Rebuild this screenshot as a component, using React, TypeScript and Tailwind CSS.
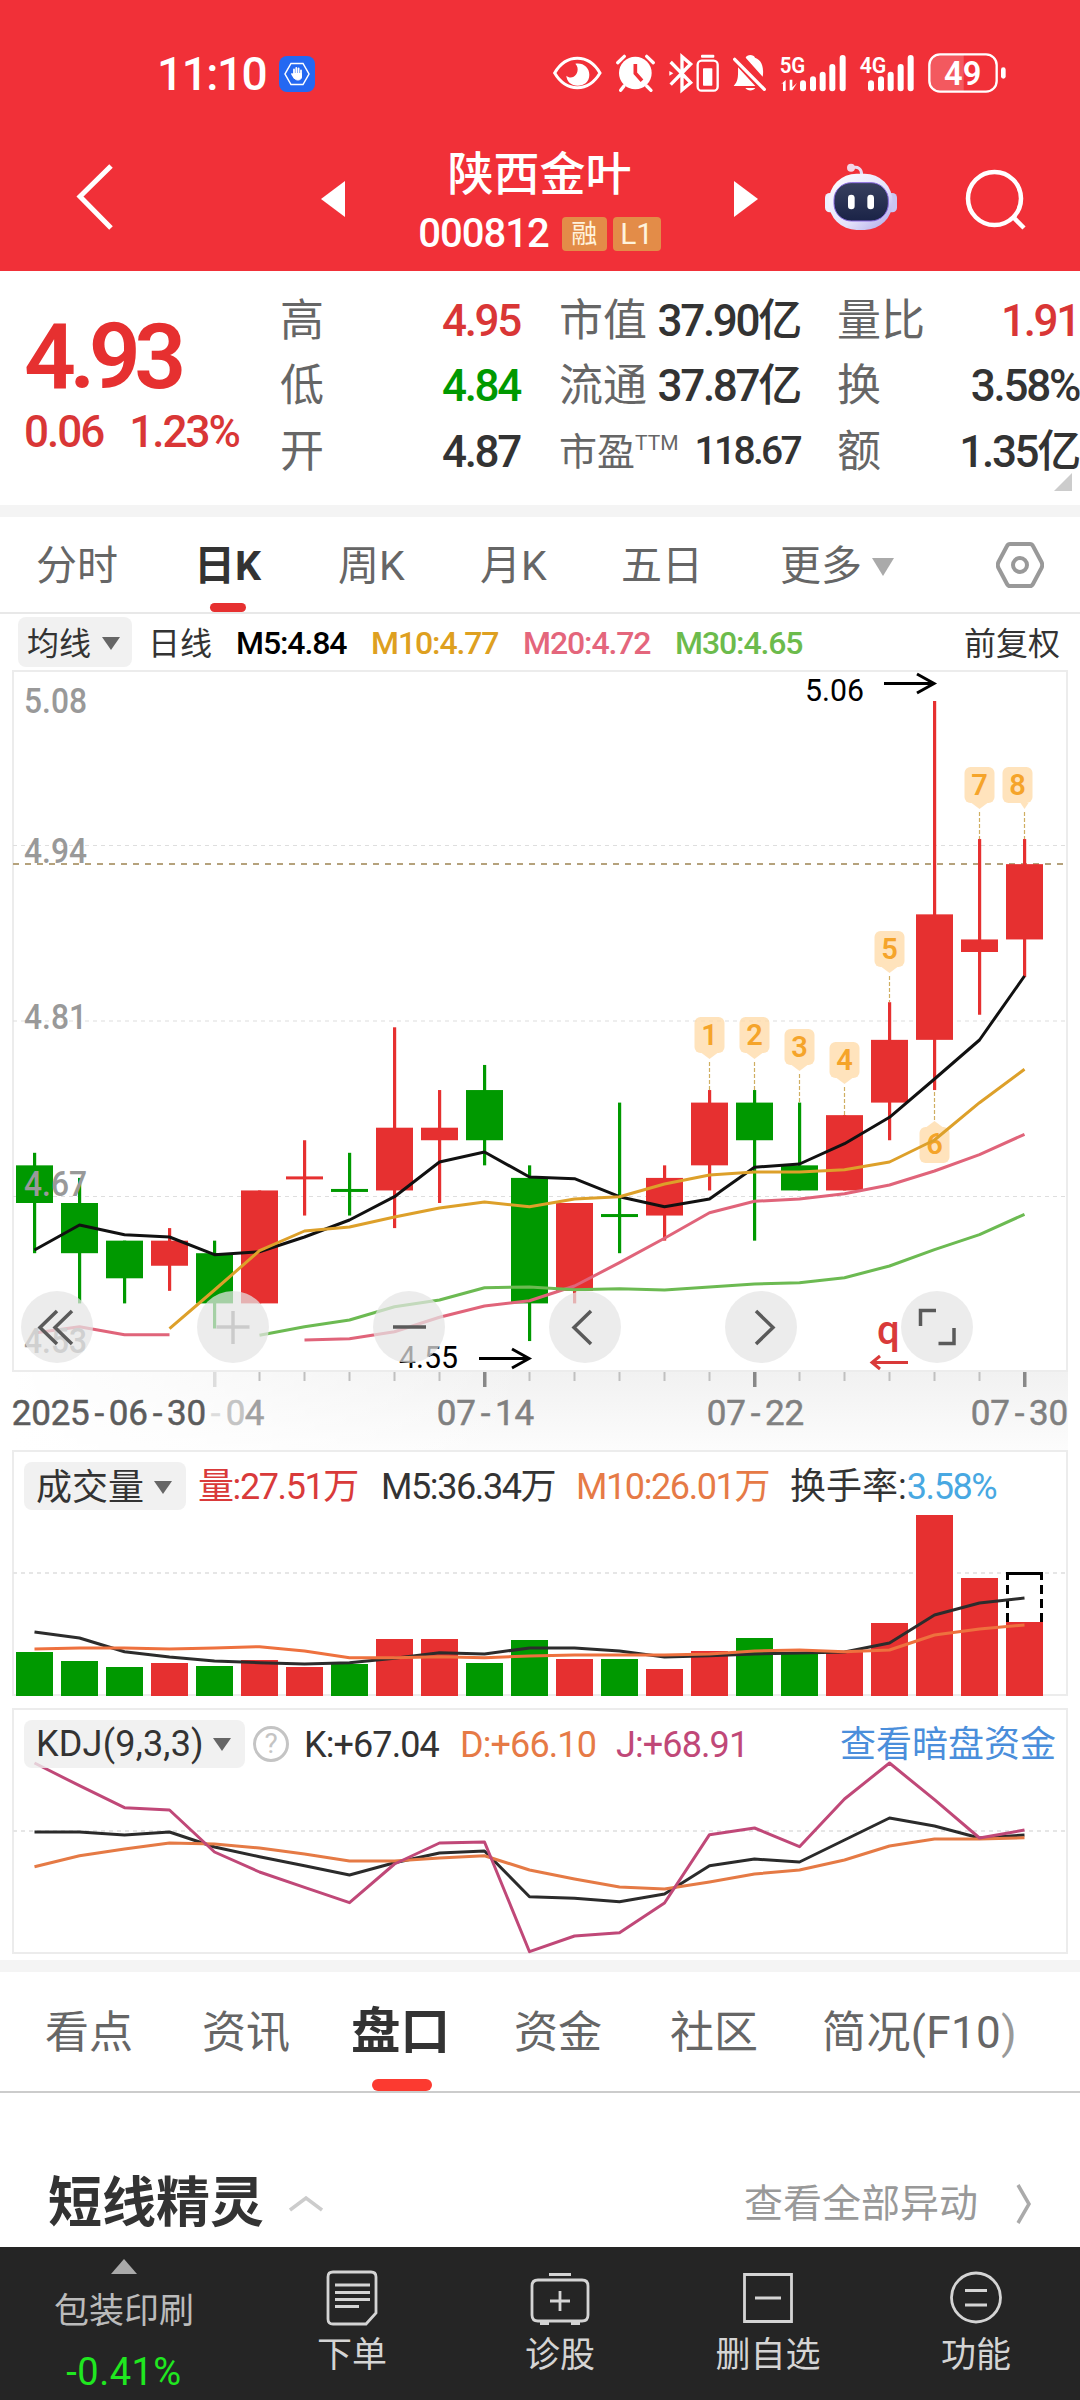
import type { ReactNode } from "react";

const UP = "#e63030";
const DOWN = "#009900";

// open, high, low, close
const candles = [
  [4.69, 4.7, 4.62, 4.66],
  [4.66, 4.68, 4.58, 4.62],
  [4.63, 4.63, 4.58, 4.6],
  [4.61, 4.64, 4.59, 4.63],
  [4.62, 4.63, 4.56, 4.58],
  [4.58, 4.67, 4.58, 4.67],
  [4.68, 4.71, 4.65, 4.68],
  [4.67, 4.7, 4.65, 4.67],
  [4.67, 4.8, 4.64, 4.72],
  [4.71, 4.75, 4.66, 4.72],
  [4.75, 4.77, 4.69, 4.71],
  [4.68, 4.69, 4.55, 4.58],
  [4.59, 4.66, 4.58, 4.66],
  [4.65, 4.74, 4.62, 4.65],
  [4.65, 4.69, 4.63, 4.68],
  [4.69, 4.75, 4.67, 4.74],
  [4.74, 4.75, 4.63, 4.71],
  [4.69, 4.74, 4.67, 4.67],
  [4.67, 4.73, 4.67, 4.73],
  [4.74, 4.82, 4.71, 4.79],
  [4.79, 5.06, 4.75, 4.89],
  [4.86, 4.95, 4.81, 4.87],
  [4.87, 4.95, 4.84, 4.93],
];

const isDown = [0, 1, 2, 4, 7, 10, 11, 13, 16, 17];

const m5 = [1250, 1225, 1234.7, 1237, 1254.7, 1251.7, 1237, 1220, 1196.7, 1162, 1152, 1177, 1178.7, 1196.7, 1206.7, 1199, 1167.3, 1164, 1143.7, 1117.3, 1079, 1040, 976];
const m10 = [1328.7, 1290, 1250.7, 1231, 1227, 1217, 1208, 1202, 1206.7, 1199, 1196.7, 1184, 1175, 1172, 1172, 1169.7, 1162, 1140, 1102.7, 1069.3];
const m20a = [1333, 1326.7, 1334.7, 1334.7];
const m20b = [1340, 1338.7, 1331.7, 1317.3, 1306, 1300.7, 1286, 1262.7, 1238.3, 1212.7, 1201.3, 1199, 1193.7, 1185, 1171, 1154.7, 1134.3];
const m30 = [1335.3, 1326.7, 1320, 1306.7, 1300, 1287.7, 1287, 1289.7, 1288.7, 1290, 1287, 1284, 1282.7, 1277.7, 1266, 1249.7, 1234.7, 1214.3];

const volumes = [1652, 1661, 1667, 1663, 1666, 1660, 1667, 1664, 1639, 1639, 1663, 1640, 1659, 1659, 1669, 1651, 1638, 1653, 1652, 1623, 1515, 1578, 1622];
const vol5 = [1632, 1638, 1651.7, 1657, 1661, 1662.7, 1664, 1662.7, 1658.3, 1652.7, 1654, 1648, 1648, 1651, 1657, 1655.7, 1654, 1653, 1652, 1643, 1615, 1603, 1598];
const vol10 = [1649, 1648, 1648, 1649, 1648, 1646.7, 1651, 1657.7, 1657.7, 1656.7, 1657.7, 1656, 1655, 1655, 1655, 1654, 1651, 1650, 1651.7, 1650, 1635, 1629, 1625];

const kLine = [1832, 1832, 1835, 1832, 1847, 1856.7, 1865.7, 1875, 1862.7, 1853, 1851, 1896.7, 1898.3, 1901.7, 1894, 1865.7, 1859, 1862, 1840, 1818, 1826, 1838, 1835];
const dLine = [1866.7, 1855.7, 1849, 1843, 1844, 1848, 1854, 1861, 1861, 1858, 1855.7, 1870, 1879, 1887, 1889, 1882, 1874, 1870, 1860, 1846, 1839, 1839, 1837.7];
const jLine = [1763, 1785.7, 1807.7, 1810, 1852, 1872, 1887.3, 1902.7, 1864, 1843, 1842, 1951.7, 1936, 1932.7, 1903, 1834.7, 1828, 1846.7, 1799, 1763, 1799.7, 1838, 1830];

const markers = [
  { n: 1, i: 15, top: 1017 },
  { n: 2, i: 16, top: 1017 },
  { n: 3, i: 17, top: 1029 },
  { n: 4, i: 18, top: 1042 },
  { n: 5, i: 19, top: 931 },
  { n: 7, i: 21, top: 767 },
  { n: 8, i: 22, top: 767 },
];

const px = (i: number) => 34.5 + 45 * i;
const py = (price: number) => 701 + (5.06 - price) * 1255;

function Line({ data, start = 0, color }: { data: number[]; start?: number; color: string }) {
  const points = data.map((y, i) => `${px(i + start)},${y}`).join(" ");
  return <polyline points={points} fill="none" stroke={color} strokeWidth="3" strokeLinejoin="round" />;
}

// every character of an axis date sits in a cell of the same width
function DateLabel({ x, text, fill = "#808080" }: { x: number; text: string; fill?: string }) {
  const cells = text.split("").map((_, i) => x + 9.7 + 19.4 * i).join(" ");
  return (
    <text x={cells} y="1425" fontSize="35" textAnchor="middle" fill={fill} stroke={fill} strokeWidth="0.500">
      {text}
    </text>
  );
}

function Caret({ className = "" }: { className?: string }) {
  return (
    <svg className={className} width="18" height="13" viewBox="0 0 18 13">
      <path d="M0 0h18L9 13z" fill="#666" />
    </svg>
  );
}

function StatusIcons() {
  return (
    <svg width="460" height="44" viewBox="30 36 1380 132" fill="#fff">
      <path d="M44 99C60 72 84 55 112 55s52 17 68 44c-16 27-40 44-68 44S60 126 44 99z" fill="none" stroke="#fff" strokeWidth="9" />
      <path d="M106 71c24-4 42 12 42 33 0 21-15 33-35 33-19 0-33-13-34-30 6 6 15 7 22 3 11-6 18-26 5-39z" />
      <circle cx="286" cy="99" r="49" />
      <path d="M233 68l20-19M340 68l-20-19M252 138l-10 13M320 138l13 13" stroke="#fff" strokeWidth="10" strokeLinecap="round" />
      <path d="M286 72v28l20 22" fill="none" stroke="#f13038" strokeWidth="11" />
      <path d="M392 66l60 62-26 22V50l26 22-60 62" fill="none" stroke="#fff" strokeWidth="10" />
      <path d="M388 93l12 7-12 7z" />
      <rect x="483" y="44" width="40" height="9" rx="3" />
      <rect x="473" y="62" width="60" height="90" rx="12" fill="none" stroke="#fff" strokeWidth="7" />
      <rect x="489" y="85" width="28" height="52" rx="2" />
      <path d="M584 58L673 148" stroke="#fff" strokeWidth="10" strokeLinecap="round" />
      <path d="M617 53c3-11 25-11 28 0 18 7 26 22 24 50l-1 7zM594 82l52 56h-65c12-14 14-22 13-56zM616 144h30c-6 10-24 10-30 0z" />
      <text x="719" y="98" fontSize="68" textLength="77" lengthAdjust="spacingAndGlyphs" className="font-semibold">5G</text>
      <path d="M723 133l14-13v33h-8v-23zM749 119h8v23l14-13-14 22h-8z" />
      <rect x="780" y="121" width="18" height="33" rx="9" />
      <rect x="810" y="109" width="18" height="45" rx="9" />
      <rect x="839" y="95" width="18" height="59" rx="9" />
      <rect x="868" y="72" width="18" height="82" rx="9" />
      <rect x="899" y="45" width="18" height="109" rx="9" />
      <text x="959" y="98" fontSize="68" textLength="80" lengthAdjust="spacingAndGlyphs" className="font-semibold">4G</text>
      <rect x="984" y="121" width="18" height="33" rx="9" />
      <rect x="1014" y="109" width="18" height="45" rx="9" />
      <rect x="1043" y="95" width="18" height="59" rx="9" />
      <rect x="1073" y="72" width="18" height="82" rx="9" />
      <rect x="1103" y="45" width="18" height="109" rx="9" />
      <path d="M1198 44h73v110h-73c-20 0-30-12-30-30V74c0-18 10-30 30-30z" fillOpacity="0.2" />
      <rect x="1168" y="43" width="202" height="112" rx="32" fill="none" stroke="#fff" strokeWidth="7" />
      <text x="1212" y="134" fontSize="100" textLength="112" lengthAdjust="spacingAndGlyphs" className="font-semibold">49</text>
      <rect x="1383" y="82" width="14" height="34" rx="7" />
    </svg>
  );
}

function Robot() {
  return (
    <svg width="74" height="68" viewBox="852 366 222 204">
      <defs>
        <linearGradient id="shell" x1="0" y1="0" x2="1" y2="1">
          <stop offset="0" stopColor="#fff" />
          <stop offset="0.6" stopColor="#e4e2fb" />
          <stop offset="1" stopColor="#a9a3e6" />
        </linearGradient>
        <linearGradient id="face" x1="0" y1="0" x2="0" y2="1">
          <stop offset="0" stopColor="#38405e" />
          <stop offset="1" stopColor="#1a2347" />
        </linearGradient>
      </defs>
      <path d="M938 380c16-4 26 3 27 20" fill="none" stroke="#e8dcf2" strokeWidth="9" />
      <circle cx="933" cy="380" r="12" fill="#f3d6e6" />
      <rect x="855" y="456" width="30" height="58" rx="14" fill="#eef0ff" />
      <rect x="1041" y="456" width="30" height="58" rx="14" fill="#c9c6f2" />
      <rect x="866" y="398" width="192" height="169" rx="84" fill="url(#shell)" />
      <rect x="882" y="425" width="163" height="115" rx="52" fill="url(#face)" stroke="#8a6be0" strokeWidth="3" />
      <rect x="924" y="461" width="20" height="44" rx="10" fill="#fff" />
      <rect x="982" y="461" width="20" height="44" rx="10" fill="#fff" />
    </svg>
  );
}

function Header() {
  return (
    <header className="flex h-[271px] flex-col bg-[#f13038] text-white">
      <div className="mt-[52px] flex h-11 items-center pl-[157px]">
        <span className="w-[122px] text-[46px] leading-none font-medium tracking-[-1.5px]">11:10</span>
        <span className="flex h-9 w-9 items-center justify-center rounded-lg bg-[#2468f2]">
          <svg width="26" height="26" viewBox="0 0 26 26" fill="none" stroke="#fff">
            <path d="M7 2.5h12L25 13l-6 10.500H7L1 13z" strokeWidth="1.500" />
            <path d="M10 13V8.500M12.300 12V7M14.600 12V7.500M17 13.500V9.500M8 13l2.500 4" strokeWidth="1.800" strokeLinecap="round" />
            <path d="M9.500 12.500h8V16c0 4-7 4-7.500 0z" fill="#fff" />
          </svg>
        </span>
        <span className="ml-[235px]">
          <StatusIcons />
        </span>
      </div>
      <div className="flex h-[130px] pt-[50px]">
        <svg className="mt-[17px] ml-[75px]" width="40" height="68" viewBox="0 0 40 68" fill="none" stroke="#fff" strokeWidth="5">
          <path d="M36 3L5 33.500 36 65" />
        </svg>
        <svg className="mt-[35px] ml-[206px]" width="24" height="36" viewBox="0 0 24 36">
          <path d="M0 18L24 0v36z" fill="#fff" />
        </svg>
        <div className="mt-[1px] flex w-[389px] flex-col items-center">
          <h1 className="text-[46px] leading-[54px] font-medium">陕西金叶</h1>
          <div className="mt-[16px] flex h-[34px] items-center gap-[6px]">
            <span className="mr-[7px] text-[40px] leading-none font-medium tracking-[-1px]">000812</span>
            <span className="flex h-[34px] w-[45px] items-center justify-center rounded-[4px] bg-[#e38c48] text-[26px] leading-none text-[#fff3dc]">融</span>
            <span className="flex h-[34px] w-12 items-center justify-center rounded-[4px] bg-[#e38c48] text-[30px] leading-none text-[#fff3dc]">L1</span>
          </div>
        </div>
        <svg className="mt-[35px]" width="24" height="36" viewBox="0 0 24 36">
          <path d="M24 18L0 0v36z" fill="#fff" />
        </svg>
        <span className="mt-[17px] ml-[66px]">
          <Robot />
        </span>
        <svg className="mt-[22px] ml-[66px]" width="62" height="62" viewBox="0 0 62 62" fill="none" stroke="#fff" strokeWidth="4.500">
          <circle cx="30.500" cy="30.500" r="26.500" />
          <path d="M49 49l11 11" />
        </svg>
      </div>
    </header>
  );
}

function Stat({ label, value, color = "text-[#333]" }: { label: ReactNode; value: string; color?: string }) {
  return (
    <div className="flex h-[65.500px] items-center justify-between whitespace-nowrap">
      <span className="text-[44px] leading-none text-[#666]">{label}</span>
      <span className={`text-[44px] leading-none font-medium tracking-[-2.300px] ${color}`}>{value}</span>
    </div>
  );
}

function Quote() {
  return (
    <section className="relative flex h-[234px] overflow-hidden pt-[17px]">
      <div className="w-[280px] pl-[24px] text-[#d93636]">
        <div className="mt-[24px] text-[91px] leading-[90px] font-semibold tracking-[-6.500px] text-[#e63030]">4.93</div>
        <div className="mt-[4px] flex gap-[26px] text-[44px] leading-[52px] font-medium tracking-[-2px]">
          <span>0.06</span>
          <span>1.23%</span>
        </div>
      </div>
      <div className="w-[240px]">
        <Stat label="高" value="4.95" color="text-[#d93636]" />
        <Stat label="低" value="4.84" color="text-[#009900]" />
        <Stat label="开" value="4.87" />
      </div>
      <div className="ml-[39px] w-[241px]">
        <Stat label="市值" value="37.90亿" />
        <Stat label="流通" value="37.87亿" />
        <div className="flex h-[65.500px] items-center justify-between text-[#666]">
          <span className="flex text-[38px] leading-none">
            市盈<span className="text-[21px]">TTM</span>
          </span>
          <span className="text-[39px] leading-none font-medium tracking-[-2.700px] text-[#333]">118.67</span>
        </div>
      </div>
      <div className="ml-[37px] w-[242px]">
        <Stat label="量比" value="1.91" color="text-[#d93636]" />
        <Stat label="换" value="3.58%" />
        <Stat label="额" value="1.35亿" />
      </div>
      <svg className="absolute right-[8px] bottom-[14px]" width="18" height="18" viewBox="0 0 18 18">
        <path d="M18 0v18H0z" fill="#ccc" />
      </svg>
    </section>
  );
}

function PeriodTabs() {
  return (
    <nav className="flex h-[97px] items-center border-b-2 border-[#e8e8e8] pt-1 pl-[36px] text-[41px] leading-none text-[#666]">
      <span className="w-[158px]">分时</span>
      <span className="relative flex h-full w-[144px] items-center font-bold text-[#333]">
        日K
        <i className="absolute bottom-0 left-[16px] h-[9px] w-9 rounded-full bg-[#e63030]" />
      </span>
      <span className="w-[142px]">周K</span>
      <span className="w-[141px]">月K</span>
      <span className="w-[159px]">五日</span>
      <span>更多</span>
      <svg className="ml-[10px]" width="22" height="18" viewBox="0 0 22 18">
        <path d="M0 0h22L11 18z" fill="#aaa" />
      </svg>
      <svg className="-mt-1 ml-[102px]" width="48" height="46" viewBox="0 0 48 46" fill="none" stroke="#999" strokeWidth="4">
        <path d="M14 2h20q2 0 3 2l8.500 16q1.500 3 0 6L37 42q-1 2-3 2H14q-2 0-3-2L2.500 26q-1.500-3 0-6L11 4q1-2 3-2z" />
        <circle cx="24" cy="23" r="7" />
      </svg>
    </nav>
  );
}

function AverageRow() {
  return (
    <div className="flex h-[56px] items-center pl-[18px] text-[32px] leading-none tracking-[-1.100px] whitespace-nowrap">
      <span className="flex h-[50px] w-[114px] items-center rounded-lg bg-[#f1f1f1] pt-[3px] pl-[9px] tracking-normal text-[#333]">
        均线
        <Caret className="ml-[11px]" />
      </span>
      <span className="ml-[16px] w-[88px] pt-[3px] tracking-normal text-[#333]">日线</span>
      <span className="w-[135px] pt-[2px] font-medium text-black">M5:4.84</span>
      <span className="w-[152px] pt-[2px] font-medium text-[#dea020]">M10:4.77</span>
      <span className="w-[152px] pt-[2px] font-medium text-[#e4667c]">M20:4.72</span>
      <span className="w-[289px] pt-[2px] font-medium text-[#6cbb4c]">M30:4.65</span>
      <span className="pt-[3px] tracking-normal text-[#333]">前复权</span>
    </div>
  );
}

function KChart() {
  return (
    <svg className="block" width="1080" height="780" viewBox="0 670 1080 780">
      <defs>
        <linearGradient id="axisFade" x1="0" y1="0" x2="0" y2="1">
          <stop offset="0" stopColor="#f1f1f1" />
          <stop offset="1" stopColor="#fcfcfc" />
        </linearGradient>
        <linearGradient id="leftFade">
          <stop offset="0" stopColor="#fff" />
          <stop offset="1" stopColor="#fff" stopOpacity="0" />
        </linearGradient>
      </defs>
      <rect x="12" y="1371" width="1056" height="79" fill="url(#axisFade)" />
      <rect x="12" y="1371" width="520" height="79" fill="url(#leftFade)" />
      <rect x="13" y="671" width="1054" height="700" fill="#fff" stroke="#ececec" strokeWidth="2" />

      {[845.5, 1021, 1196.5].map((y) => (
        <path key={y} d={`M13 ${y}H1065`} stroke="#dedede" strokeWidth="1.200" strokeDasharray="4 4" />
      ))}

      <path d="M13 864H1065" stroke="#b5a27c" strokeWidth="2" strokeDasharray="6 6" />

      {candles.map(([open, high, low, close], i) => {
        const color = isDown.includes(i) ? DOWN : UP;
        const top = py(Math.max(open, close));
        const height = Math.abs(open - close) * 1255;
        return (
          <g key={i} fill={color}>
            <rect x={px(i) - 1.500} y={py(high)} width="3.200" height={py(low) - py(high)} />
            <rect x={px(i) - 18.500} y={height ? top : top - 1.500} width="37" height={height || 3} />
          </g>
        );
      })}

      {markers.map(({ n, i, top }) => (
        <g key={n}>
          <path d={`M${px(i)} ${top + 45}V${py(candles[i][1])}`} stroke="#cfae62" strokeWidth="1.200" strokeDasharray="4 2" />
          <rect x={px(i) - (n === 8 ? 22 : 15)} y={top} width="30" height="36" rx="6" fill="#ffd9a6" fillOpacity="0.75" />
          <path d={n === 8 ? `M${px(i) - 4} ${top + 36}l4 6 4 -6z` : `M${px(i) - 8} ${top + 36}l8 6 8 -6z`} fill="#ffd9a6" fillOpacity="0.75" />
          <text x={px(i) - (n === 8 ? 7 : 0)} y={top + 28} fontSize="29" textAnchor="middle" fill="#f5a42a" className="font-semibold">
            {n}
          </text>
        </g>
      ))}
      <path d={`M${px(20)} 1092v28`} stroke="#cfae62" strokeWidth="1.200" strokeDasharray="4 2" />
      <rect x={px(20) - 15} y="1127" width="30" height="36" rx="6" fill="#ffd9a6" fillOpacity="0.75" />
      <path d={`M${px(20) - 8} 1127l8 -6 8 6z`} fill="#ffd9a6" fillOpacity="0.75" />
      <text x={px(20)} y="1154" fontSize="29" textAnchor="middle" fill="#f5a42a" className="font-semibold">6</text>

      <Line data={m5} color="#111" />
      <Line data={m10} start={3} color="#dda02a" />
      <Line data={m20a} color="#e0647a" />
      <Line data={m20b} start={6} color="#e0647a" />
      <Line data={m30} start={5} color="#6cba52" />

      <g fill="#999" fontSize="35" className="font-medium">
        <text x="24" y="713" textLength="63" lengthAdjust="spacingAndGlyphs">5.08</text>
        <text x="24" y="863" textLength="63" lengthAdjust="spacingAndGlyphs">4.94</text>
        <text x="24" y="1029" textLength="63" lengthAdjust="spacingAndGlyphs">4.81</text>
        <text x="24" y="1196" textLength="63" lengthAdjust="spacingAndGlyphs">4.67</text>
        <text x="24" y="1353" textLength="63" lengthAdjust="spacingAndGlyphs">4.53</text>
      </g>

      <g fontSize="31" fill="#000">
        <text x="805" y="701" textLength="59" lengthAdjust="spacingAndGlyphs">5.06</text>
        <text x="399" y="1368" textLength="59" lengthAdjust="spacingAndGlyphs">4.55</text>
      </g>
      <g fill="none" stroke="#000" strokeWidth="3">
        <path d="M884 683.500h49M917 674l17 9.500-17 9.500" />
        <path d="M479 1358.500h49M512 1349l17 9.500-17 9.500" />
      </g>
      <text x="877" y="1344" fontSize="40" fill="#d93a3a" className="font-medium">q</text>
      <path d="M908 1362.500h-36M880 1356l-8 6.500 8 6.500" fill="none" stroke="#d93a3a" strokeWidth="3" />

      {[57, 233, 409, 585, 761, 937].map((x) => (
        <circle key={x} cx={x} cy="1327" r="36" fill="#e5e5e5" fillOpacity="0.72" />
      ))}
      <g fill="none" stroke="#5a5a5a" strokeWidth="3.500">
        <path d="M57 1311l-17 16.500 17 16.500M72 1311l-17 16.500 17 16.500" />
        <path d="M233 1311v33M216.500 1327h33" stroke="#cbcbcb" />
        <path d="M393 1327h33" />
        <path d="M591 1311l-17 16.500 17 16.500" />
        <path d="M756 1311l17 16.500-17 16.500" />
        <path d="M936 1310.500h-15.500V1326M938.500 1343.500H954V1328" />
      </g>

      {candles.slice(4).map((_, n) => {
        const i = n + 4;
        const major = (i - 4) % 6 === 0;
        return <rect key={i} x={px(i) - (major ? 1.500 : 1)} y="1372" width={major ? 3.500 : 2} height={major ? 15 : 9} fill={i === 4 ? "#ddd" : major ? "#888" : "#c0c0c0"} />;
      })}
      <DateLabel x={12} text="2025-06-30" fill="#5c5c5c" />
      <DateLabel x={206} text="-" fill="#dcdcdc" />
      <DateLabel x={226} text="0" fill="#c4c4c4" />
      <DateLabel x={245} text="4" fill="#a0a0a0" />
      <DateLabel x={437} text="07-14" />
      <DateLabel x={707} text="07-22" />
      <DateLabel x={971} text="07-30" />
    </svg>
  );
}

function VolumePanel() {
  return (
    <section className="grid">
      <svg className="col-start-1 row-start-1 block" width="1080" height="258" viewBox="0 1450 1080 258">
        <rect x="13" y="1451" width="1054" height="244" fill="#fff" stroke="#ececec" strokeWidth="2" />
        <path d="M13 1573H1065" stroke="#e6e6e6" strokeWidth="2" strokeDasharray="4 4" />
        {volumes.map((y, i) => (
          <rect key={i} x={px(i) - 18.500} y={y} width="37" height={1696 - y} fill={isDown.includes(i) ? DOWN : UP} />
        ))}
        <path d="M1007.500 1622V1573M1041.500 1622V1573" stroke="#000" strokeWidth="3" strokeDasharray="9 5" />
        <path d="M1006 1573.500h37" stroke="#000" strokeWidth="3" />
        <Line data={vol5} color="#2c2c2c" />
        <Line data={vol10} color="#ee713e" />
      </svg>
      <div className="z-10 col-start-1 row-start-1 mt-3 flex h-12 items-center pl-6 text-[36px] leading-none tracking-[-1.400px] whitespace-nowrap text-[#333]">
        <span className="flex h-12 w-[162px] items-center rounded-lg bg-[#f1f1f1] pt-[3px] pl-[12px] tracking-normal">
          成交量
          <Caret className="ml-[10px]" />
        </span>
        <span className="ml-[12px] w-[183px] pt-[2px] text-[#d93a3a]">量:27.51万</span>
        <span className="w-[195px] pt-[2px]">M5:36.34万</span>
        <span className="w-[214px] pt-[2px] text-[#e67a46]">M10:26.01万</span>
        <span className="pt-[2px] tracking-normal">换手率:</span>
        <span className="pt-[2px] text-[#48a8e2]">3.58%</span>
      </div>
    </section>
  );
}

function KdjPanel() {
  return (
    <section className="grid">
      <svg className="col-start-1 row-start-1 block" width="1080" height="252" viewBox="0 1708 1080 252">
        <rect x="13" y="1709" width="1054" height="244" fill="#fff" stroke="#ececec" strokeWidth="2" />
        <path d="M13 1831H1065" stroke="#e6e6e6" strokeWidth="2" strokeDasharray="4 4" />
        <Line data={kLine} color="#2b2b2b" />
        <Line data={dLine} color="#e57a45" />
        <Line data={jLine} color="#c04878" />
      </svg>
      <div className="z-10 col-start-1 row-start-1 mt-3 flex h-12 items-center pl-6 text-[36px] leading-none tracking-[-0.900px] whitespace-nowrap text-[#333]">
        <span className="flex h-12 w-[221px] items-center rounded-lg bg-[#eeeeee]/80 pl-[12px] tracking-[0.200px]">
          KDJ(9,3,3)
          <Caret className="ml-[9px]" />
        </span>
        <span className="ml-[8px] flex h-9 w-9 items-center justify-center rounded-full border-[3px] border-[#c4c4c4] text-[28px] tracking-normal text-[#c4c4c4]">?</span>
        <span className="ml-[15px] w-[156px] pt-[2px]">K:+67.04</span>
        <span className="w-[156px] pt-[2px] text-[#e67a46]">D:+66.10</span>
        <span className="w-[224px] pt-[2px] text-[#c04878]">J:+68.91</span>
        <span className="pt-[2px] tracking-normal text-[#4a8edb]">查看暗盘资金</span>
      </div>
    </section>
  );
}

function DetailTabs() {
  return (
    <nav className="flex h-[121px] items-center border-b-2 border-[#ccc] pt-[3px] pl-[45px] text-[44px] leading-none whitespace-nowrap text-[#666]">
      <span className="w-[157px]">看点</span>
      <span className="w-[149px]">资讯</span>
      <span className="relative flex h-full w-[163px] items-center text-[49.500px] font-bold text-[#333]">
        盘口
        <i className="absolute bottom-0 left-[21px] h-3 w-[60px] rounded-full bg-[#fc3a30]" />
      </span>
      <span className="w-[156px]">资金</span>
      <span className="w-[152px]">社区</span>
      <span className="tracking-[0.400px]">
        简况(F10<span className="text-[#999]">)</span>
      </span>
    </nav>
  );
}

function NavItem({ label, children }: { label: string; children: ReactNode }) {
  return (
    <div className="flex w-[208px] flex-col items-center pt-[20px] text-[#d4d4d4]">
      <svg width="60" height="60" viewBox="0 0 60 60" fill="none" stroke="currentColor" strokeWidth="2.800">
        {children}
      </svg>
      <span className="mt-[11px] text-[35px] leading-[36px]">{label}</span>
    </div>
  );
}

function BottomBar() {
  return (
    <footer className="flex h-[153px] bg-[#252525]">
      <div className="flex w-[248px] flex-col items-center pt-[12px]">
        <svg width="26" height="15" viewBox="0 0 26 15">
          <path d="M13 0l13 15H0z" fill="#aaa" />
        </svg>
        <span className="mt-[20px] text-[35px] leading-[36px] text-[#bbb]">包装印刷</span>
        <span className="mt-[22px] text-[38px] leading-[40px] tracking-[0.500px] text-[#20e820]">-0.41%</span>
      </div>
      <NavItem label="下单">
        <path d="M11 5h38q5 0 5 5v36L44 57H11q-5 0-5-5V10q0-5 5-5z" />
        <path d="M13 18h35M13 25.500h35M13 32.500h35M13 39.500h24" />
      </NavItem>
      <NavItem label="诊股">
        <path d="M19 7.500h22M8 13h44q6 0 6 6v29q0 6-6 6H8q-6 0-6-6V19q0-6 6-6zM30 24v20M20 34h20M10 56.500h9M41 56.500h9" />
      </NavItem>
      <NavItem label="删自选">
        <path d="M6.500 7.500h47v47h-47zM17 31h26" />
      </NavItem>
      <NavItem label="功能">
        <circle cx="30" cy="30.500" r="24.500" />
        <path d="M19 23.500h22M19 38h22" />
      </NavItem>
    </footer>
  );
}

export default function App() {
  return (
    <main className="flex h-[2400px] w-[1080px] flex-col overflow-hidden bg-white font-['Roboto','Noto_Sans_CJK_SC',sans-serif]">
      <Header />
      <Quote />
      <div className="h-3 bg-[#f4f4f4]" />
      <PeriodTabs />
      <AverageRow />
      <KChart />
      <VolumePanel />
      <KdjPanel />
      <div className="h-3 bg-[#f4f4f4]" />
      <DetailTabs />
      <section className="flex h-[154px] items-center pt-[68px] pl-[48px]">
        <h2 className="text-[54px] leading-none font-bold text-[#333]">短线精灵</h2>
        <svg className="ml-[25px]" width="34" height="16" viewBox="0 0 34 16" fill="none" stroke="#ccc" strokeWidth="3.500">
          <path d="M1 14L17 2l16 12" />
        </svg>
        <span className="ml-[421px] text-[39px] leading-none text-[#999]">查看全部异动</span>
        <svg className="ml-[38px]" width="16" height="40" viewBox="0 0 16 40" fill="none" stroke="#aaa" strokeWidth="3.500">
          <path d="M2 1l11 19L2 39" />
        </svg>
      </section>
      <BottomBar />
    </main>
  );
}
